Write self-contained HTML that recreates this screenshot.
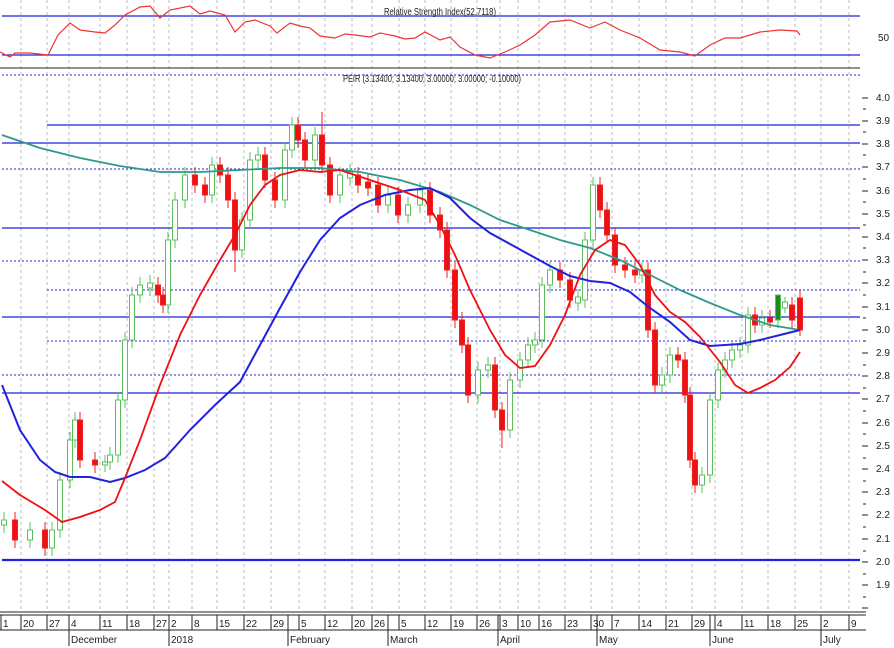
<!DOCTYPE html>
<html><head><meta charset="utf-8"><style>
html,body{margin:0;padding:0;background:#fff;width:894px;height:648px;overflow:hidden}
svg{display:block;font-family:"Liberation Sans",sans-serif}
</style></head><body>
<svg width="894" height="648" viewBox="0 0 894 648" xmlns="http://www.w3.org/2000/svg">
<g stroke="#bbb" stroke-width="1" stroke-dasharray="3,3">
<line x1="21" y1="0" x2="21" y2="612"/><line x1="47" y1="0" x2="47" y2="612"/><line x1="69" y1="0" x2="69" y2="612"/><line x1="100" y1="0" x2="100" y2="612"/><line x1="127" y1="0" x2="127" y2="612"/><line x1="154" y1="0" x2="154" y2="612"/><line x1="169" y1="0" x2="169" y2="612"/><line x1="192" y1="0" x2="192" y2="612"/><line x1="217" y1="0" x2="217" y2="612"/><line x1="244" y1="0" x2="244" y2="612"/><line x1="271" y1="0" x2="271" y2="612"/><line x1="299" y1="0" x2="299" y2="612"/><line x1="325" y1="0" x2="325" y2="612"/><line x1="352" y1="0" x2="352" y2="612"/><line x1="372" y1="0" x2="372" y2="612"/><line x1="399" y1="0" x2="399" y2="612"/><line x1="425" y1="0" x2="425" y2="612"/><line x1="451" y1="0" x2="451" y2="612"/><line x1="477" y1="0" x2="477" y2="612"/><line x1="500" y1="0" x2="500" y2="612"/><line x1="518" y1="0" x2="518" y2="612"/><line x1="539" y1="0" x2="539" y2="612"/><line x1="565" y1="0" x2="565" y2="612"/><line x1="591" y1="0" x2="591" y2="612"/><line x1="612" y1="0" x2="612" y2="612"/><line x1="639" y1="0" x2="639" y2="612"/><line x1="666" y1="0" x2="666" y2="612"/><line x1="692" y1="0" x2="692" y2="612"/><line x1="715" y1="0" x2="715" y2="612"/><line x1="742" y1="0" x2="742" y2="612"/><line x1="768" y1="0" x2="768" y2="612"/><line x1="795" y1="0" x2="795" y2="612"/><line x1="821" y1="0" x2="821" y2="612"/><line x1="849" y1="0" x2="849" y2="612"/>
</g>
<line x1="2" y1="16" x2="860" y2="16" stroke="#2222dd" stroke-width="1.3"/>
<line x1="2" y1="55" x2="860" y2="55" stroke="#2222dd" stroke-width="1.3"/>
<text x="440" y="15" font-size="10" text-anchor="middle" fill="#222" textLength="112" lengthAdjust="spacingAndGlyphs">Relative Strength Index(52.7118)</text>
<text x="878" y="41" font-size="10" fill="#222">50</text>
<polyline fill="none" stroke="#ee3333" stroke-width="1.2" points="0,52 10,57 15,53 30,53 48,55 58,35 70,23 80,30 95,32 105,33 115,25 125,15 140,7 150,6 160,18 170,10 190,6 200,14 210,11 225,15 235,32 245,22 255,20 270,26 277,33 290,23 300,26 310,28 320,36 335,38 345,34 355,35 370,37 380,33 395,36 405,39 415,38 425,32 440,40 450,37 460,47 475,55 490,58 505,52 520,45 535,35 550,22 570,20 590,28 605,22 620,30 640,38 660,50 680,52 695,56 710,45 725,38 740,38 760,32 780,30 797,31 800,35"/>
<line x1="0" y1="68" x2="860" y2="68" stroke="#222" stroke-width="1"/>
<line x1="2" y1="75" x2="860" y2="75" stroke="#2222dd" stroke-width="1" stroke-dasharray="2,2"/>
<text x="343" y="82" font-size="10" fill="#222" textLength="178" lengthAdjust="spacingAndGlyphs">PEIR (3.13400; 3.13400; 3.00000; 3.00000; -0.10000)</text>
<g stroke="#2222dd" stroke-width="1.3">
<line x1="47" y1="125" x2="860" y2="125"/><line x1="2" y1="143" x2="860" y2="143"/><line x1="2" y1="228" x2="860" y2="228"/><line x1="2" y1="317" x2="860" y2="317"/><line x1="2" y1="393" x2="860" y2="393"/><line x1="2" y1="560" x2="860" y2="560" stroke-width="2.2"/>
</g>
<g stroke="#2222dd" stroke-width="1" stroke-dasharray="2,2">
<line x1="2" y1="169" x2="860" y2="169"/><line x1="2" y1="261" x2="860" y2="261"/><line x1="47" y1="290" x2="860" y2="290"/><line x1="47" y1="341" x2="860" y2="341"/><line x1="2" y1="375" x2="860" y2="375"/>
</g>
<!-- green candles -->
<g fill="#fff" stroke="#5cbf5c" stroke-width="1">
<path d="M4 512V533M30 522V548M52 522V556M60 472V538M70 432V488M75 412V448M105 455V472M110 447V470M118 392V463M125 332V408M132 287V348M140 277V303M150 275V296M168 232V313M175 192V248M185 167V208M212 157V203M242 212V258M250 152V228M258 147V168M285 142V208M292 117V158M315 127V168M340 167V203M350 164V186M388 187V213M408 197V223M420 182V213M478 362V403M488 357V378M510 372V438M520 352V388M528 337V368M535 332V353M542 277V348M550 262V293M578 289V311M585 232V308M593 177V248M642 262V283M662 367V393M670 347V383M702 467V493M710 392V483M718 362V408M725 352V378M732 342V368M740 337V358M748 307V353M762 310V333M778 295V328M785 297V313"/>
<rect x="1.5" y="520" width="5" height="5"/><rect x="27.5" y="530" width="5" height="10"/><rect x="49.5" y="530" width="5" height="18"/><rect x="57.5" y="480" width="5" height="50"/><rect x="67.5" y="440" width="5" height="40"/><rect x="72.5" y="420" width="5" height="20"/><rect x="102.5" y="462" width="5" height="3"/><rect x="107.5" y="455" width="5" height="7"/><rect x="115.5" y="400" width="5" height="55"/><rect x="122.5" y="340" width="5" height="60"/><rect x="129.5" y="295" width="5" height="45"/><rect x="137.5" y="285" width="5" height="10"/><rect x="147.5" y="283" width="5" height="5"/><rect x="165.5" y="240" width="5" height="65"/><rect x="172.5" y="200" width="5" height="40"/><rect x="182.5" y="175" width="5" height="25"/><rect x="209.5" y="165" width="5" height="30"/><rect x="239.5" y="220" width="5" height="30"/><rect x="247.5" y="160" width="5" height="60"/><rect x="255.5" y="155" width="5" height="5"/><rect x="282.5" y="150" width="5" height="50"/><rect x="289.5" y="125" width="5" height="25"/><rect x="312.5" y="135" width="5" height="25"/><rect x="337.5" y="175" width="5" height="20"/><rect x="347.5" y="172" width="5" height="6"/><rect x="385.5" y="195" width="5" height="10"/><rect x="405.5" y="205" width="5" height="10"/><rect x="417.5" y="190" width="5" height="15"/><rect x="475.5" y="370" width="5" height="25"/><rect x="485.5" y="365" width="5" height="5"/><rect x="507.5" y="380" width="5" height="50"/><rect x="517.5" y="360" width="5" height="20"/><rect x="525.5" y="345" width="5" height="15"/><rect x="532.5" y="340" width="5" height="5"/><rect x="539.5" y="285" width="5" height="55"/><rect x="547.5" y="270" width="5" height="15"/><rect x="575.5" y="297" width="5" height="6"/><rect x="582.5" y="240" width="5" height="60"/><rect x="590.5" y="185" width="5" height="55"/><rect x="639.5" y="270" width="5" height="5"/><rect x="659.5" y="375" width="5" height="10"/><rect x="667.5" y="355" width="5" height="20"/><rect x="699.5" y="475" width="5" height="10"/><rect x="707.5" y="400" width="5" height="75"/><rect x="715.5" y="370" width="5" height="30"/><rect x="722.5" y="360" width="5" height="10"/><rect x="729.5" y="350" width="5" height="10"/><rect x="737.5" y="345" width="5" height="5"/><rect x="745.5" y="315" width="5" height="30"/><rect x="759.5" y="318" width="5" height="7"/><rect x="775.5" y="295" width="5" height="25" fill="#1d8a1d"/><rect x="782.5" y="302" width="5" height="6"/>
<rect x="217.5" y="115" width="5" height="0" />
</g>
<!-- red candles -->
<g fill="#ee1111" stroke="#ee2222" stroke-width="1">
<path d="M15 512V548M45 522V556M80 412V468M95 452V473M158 277V303M163 287V313M195 167V193M205 177V203M220 157V183M228 167V208M235 192V272M265 147V188M275 172V208M298 117V148M305 132V168M322 112V173M330 157V203M358 167V193M368 174V196M378 177V213M398 187V223M430 182V223M440 207V238M447 222V278M455 262V328M462 312V353M468 337V403M495 357V418M502 402V448M560 262V288M570 272V308M600 177V218M607 202V243M615 227V273M625 257V278M635 262V283M648 262V338M655 322V393M678 347V368M685 352V403M690 387V468M695 452V493M755 307V333M770 310V328M792 297V328M800 290V336"/>
<rect x="12.5" y="520" width="5" height="20"/><rect x="42.5" y="530" width="5" height="18"/><rect x="77.5" y="420" width="5" height="40"/><rect x="92.5" y="460" width="5" height="5"/><rect x="155.5" y="285" width="5" height="10"/><rect x="160.5" y="295" width="5" height="10"/><rect x="192.5" y="175" width="5" height="10"/><rect x="202.5" y="185" width="5" height="10"/><rect x="217.5" y="165" width="5" height="10"/><rect x="225.5" y="175" width="5" height="25"/><rect x="232.5" y="200" width="5" height="50"/><rect x="262.5" y="155" width="5" height="25"/><rect x="272.5" y="180" width="5" height="20"/><rect x="295.5" y="125" width="5" height="15"/><rect x="302.5" y="140" width="5" height="20"/><rect x="319.5" y="135" width="5" height="30"/><rect x="327.5" y="165" width="5" height="30"/><rect x="355.5" y="175" width="5" height="10"/><rect x="365.5" y="182" width="5" height="6"/><rect x="375.5" y="185" width="5" height="20"/><rect x="395.5" y="195" width="5" height="20"/><rect x="427.5" y="190" width="5" height="25"/><rect x="437.5" y="215" width="5" height="15"/><rect x="444.5" y="230" width="5" height="40"/><rect x="452.5" y="270" width="5" height="50"/><rect x="459.5" y="320" width="5" height="25"/><rect x="465.5" y="345" width="5" height="50"/><rect x="492.5" y="365" width="5" height="45"/><rect x="499.5" y="410" width="5" height="20"/><rect x="557.5" y="270" width="5" height="10"/><rect x="567.5" y="280" width="5" height="20"/><rect x="597.5" y="185" width="5" height="25"/><rect x="604.5" y="210" width="5" height="25"/><rect x="612.5" y="235" width="5" height="30"/><rect x="622.5" y="265" width="5" height="5"/><rect x="632.5" y="270" width="5" height="5"/><rect x="645.5" y="270" width="5" height="60"/><rect x="652.5" y="330" width="5" height="55"/><rect x="675.5" y="355" width="5" height="5"/><rect x="682.5" y="360" width="5" height="35"/><rect x="687.5" y="395" width="5" height="65"/><rect x="692.5" y="460" width="5" height="25"/><rect x="752.5" y="315" width="5" height="10"/><rect x="767.5" y="318" width="5" height="4"/><rect x="789.5" y="305" width="5" height="15"/><rect x="797.5" y="298" width="5" height="32"/>
</g>
<polyline fill="none" stroke="#2e9a8a" stroke-width="1.8" points="2,135 40,148 80,158 120,166 160,172 200,172 240,170 280,168 320,168 360,172 400,180 440,192 470,205 500,220 530,230 560,240 590,248 620,260 650,275 680,290 710,303 740,315 770,325 800,330"/>
<polyline fill="none" stroke="#2222dd" stroke-width="2" points="2,385 20,430 40,460 55,472 70,477 90,477 110,482 125,478 145,470 165,458 190,430 215,405 240,382 260,345 280,308 300,272 320,240 340,218 360,205 385,195 410,190 430,188 450,198 470,218 490,233 510,244 530,255 550,266 570,276 590,281 610,283 630,292 650,308 670,322 690,340 710,346 740,344 760,340 780,335 800,330"/>
<polyline fill="none" stroke="#ee1111" stroke-width="1.8" points="2,481 20,495 45,510 62,522 80,517 100,510 115,502 125,478 140,440 160,385 180,335 200,295 220,260 235,235 250,205 265,185 280,175 300,170 320,172 340,170 370,180 400,190 425,200 440,225 455,255 470,290 490,330 505,355 520,368 535,366 550,345 565,315 580,275 595,250 610,240 625,245 640,265 655,295 670,312 685,322 700,337 720,362 735,385 748,393 760,388 775,380 790,367 800,352"/>
<g font-size="10" fill="#222">
<path stroke="#222" d="M862 98H868M862 121H868M862 144H868M862 167H868M862 191H868M862 214H868M862 237H868M862 260H868M862 283H868M862 307H868M862 330H868M862 353H868M862 376H868M862 399H868M862 423H868M862 446H868M862 469H868M862 492H868M862 515H868M862 539H868M862 562H868M862 585H868M862 608H868M863 109H866M863 132H866M863 155H866M863 179H866M863 202H866M863 225H866M863 248H866M863 272H866M863 295H866M863 318H866M863 341H866M863 365H866M863 388H866M863 411H866M863 434H866M863 458H866M863 481H866M863 504H866M863 527H866M863 551H866M863 574H866M863 597H866"/>
<text x="876" y="101">4.0</text><text x="876" y="124">3.9</text><text x="876" y="147">3.8</text><text x="876" y="170">3.7</text><text x="876" y="194">3.6</text><text x="876" y="217">3.5</text><text x="876" y="240">3.4</text><text x="876" y="263">3.3</text><text x="876" y="286">3.2</text><text x="876" y="310">3.1</text><text x="876" y="333">3.0</text><text x="876" y="356">2.9</text><text x="876" y="379">2.8</text><text x="876" y="402">2.7</text><text x="876" y="426">2.6</text><text x="876" y="449">2.5</text><text x="876" y="472">2.4</text><text x="876" y="495">2.3</text><text x="876" y="518">2.2</text><text x="876" y="542">2.1</text><text x="876" y="565">2.0</text><text x="876" y="588">1.9</text>
</g>
<line x1="0" y1="612" x2="866" y2="612" stroke="#222"/>
<line x1="0" y1="615" x2="866" y2="615" stroke="#222"/>
<line x1="0" y1="630" x2="866" y2="630" stroke="#222"/>
<g font-size="10" fill="#222">
<path stroke="#222" d="M1 615V630M21 615V630M47 615V630M69 615V646M100 615V630M127 615V630M154 615V630M169 615V646M192 615V630M217 615V630M244 615V630M271 615V630M288 615V646M299 615V630M325 615V630M352 615V630M372 615V630M388 615V646M399 615V630M425 615V630M451 615V630M477 615V630M498 615V646M500 615V630M518 615V630M539 615V630M565 615V630M591 615V630M597 615V646M612 615V630M639 615V630M666 615V630M692 615V630M710 615V646M715 615V630M742 615V630M768 615V630M795 615V630M821 615V646M849 615V630"/>
<text x="3" y="627">1</text><text x="23" y="627">20</text><text x="49" y="627">27</text><text x="71" y="627">4</text><text x="102" y="627">11</text><text x="129" y="627">18</text><text x="156" y="627">27</text><text x="171" y="627">2</text><text x="194" y="627">8</text><text x="219" y="627">15</text><text x="246" y="627">22</text><text x="273" y="627">29</text><text x="301" y="627">5</text><text x="327" y="627">12</text><text x="354" y="627">20</text><text x="374" y="627">26</text><text x="401" y="627">5</text><text x="427" y="627">12</text><text x="453" y="627">19</text><text x="479" y="627">26</text><text x="502" y="627">3</text><text x="520" y="627">10</text><text x="541" y="627">16</text><text x="567" y="627">23</text><text x="593" y="627">30</text><text x="614" y="627">7</text><text x="641" y="627">14</text><text x="668" y="627">21</text><text x="694" y="627">29</text><text x="717" y="627">4</text><text x="744" y="627">11</text><text x="770" y="627">18</text><text x="797" y="627">25</text><text x="823" y="627">2</text><text x="851" y="627">9</text>
<text x="71" y="643">December</text><text x="171" y="643">2018</text><text x="290" y="643">February</text><text x="390" y="643">March</text><text x="500" y="643">April</text><text x="599" y="643">May</text><text x="712" y="643">June</text><text x="823" y="643">July</text>
</g>
</svg>
</body></html>
